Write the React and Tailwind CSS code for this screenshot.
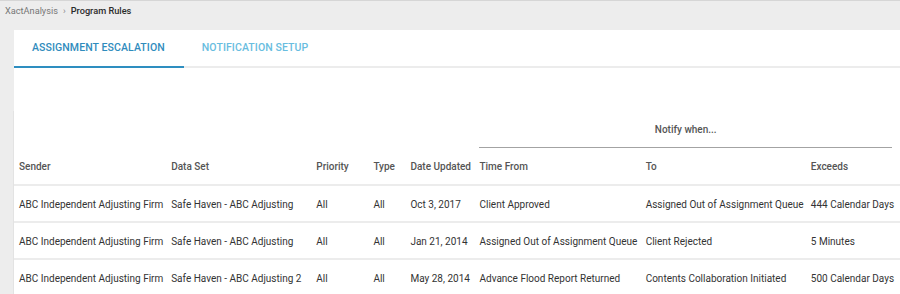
const rows = [
  {
    sender: "ABC Independent Adjusting Firm",
    dataSet: "Safe Haven - ABC Adjusting",
    priority: "All",
    type: "All",
    date: "Oct 3, 2017",
    from: "Client Approved",
    to: "Assigned Out of Assignment Queue",
    exceeds: "444 Calendar Days",
  },
  {
    sender: "ABC Independent Adjusting Firm",
    dataSet: "Safe Haven - ABC Adjusting",
    priority: "All",
    type: "All",
    date: "Jan 21, 2014",
    from: "Assigned Out of Assignment Queue",
    to: "Client Rejected",
    exceeds: "5 Minutes",
  },
  {
    sender: "ABC Independent Adjusting Firm",
    dataSet: "Safe Haven - ABC Adjusting 2",
    priority: "All",
    type: "All",
    date: "May 28, 2014",
    from: "Advance Flood Report Returned",
    to: "Contents Collaboration Initiated",
    exceeds: "500 Calendar Days",
  },
];

const headers = ["Sender", "Data Set", "Priority", "Type", "Date Updated", "Time From", "To", "Exceeds"];
const widths = [152, 145, 57, 37, 69, 166, 165, 95];

const App = () => {
  return (
    <div
      className="w-[900px] h-[294px] overflow-hidden bg-[#ededed] border-t border-[#d6d6d6]"
      style={{ fontFamily: "Roboto, 'Liberation Sans', sans-serif" }}
    >
      {/* Breadcrumb */}
      <div className="h-[29px] flex items-start pt-[2px] pl-[5px] text-[9.2px] leading-[16px]">
        <span className="text-[#777]">XactAnalysis</span>
        <span className="text-[#888] mx-[5px]">›</span>
        <span className="text-[#2b2b2b] font-medium">Program Rules</span>
      </div>

      {/* Card */}
      <div className="ml-[14px] bg-white h-[300px]">
        <div className="flex items-start border-b-2 border-[#ececec]">
          <button className="h-[38px] -mb-[2px] pl-[18px] pr-[19px] text-[10.5px] font-medium tracking-[0.1px] text-[#2f8cbd] border-b-2 border-[#2e8ec0]">
            ASSIGNMENT ESCALATION
          </button>
          <button className="h-[36px] px-[18px] text-[10.5px] font-medium tracking-[0.1px] text-[#68bde0]">
            NOTIFICATION SETUP
          </button>
        </div>

        <div className="h-[43px]" />

        <div className="border-l border-[#e3e3e3] -ml-px">
          <table className="table-fixed border-collapse text-[10px] w-[887px]">
            <colgroup>
              {widths.map((w, i) => (
                <col key={i} style={{ width: w }} />
              ))}
            </colgroup>
            <thead>
              <tr className="h-[37px]">
                <th colSpan={5}></th>
                <th colSpan={3} className="pl-[5px] pr-[9px] align-bottom">
                  <div className="h-[36px] flex items-center justify-center border-b border-[#a3a3a3] text-[#555] font-medium">
                    Notify when...
                  </div>
                </th>
              </tr>
              <tr className="h-[37px] border-b-2 border-[#ececec]">
                {headers.map((h) => (
                  <th key={h} className="pl-[5px] text-left font-medium text-[#555] whitespace-nowrap">
                    {h}
                  </th>
                ))}
              </tr>
            </thead>
            <tbody>
              {rows.map((r, i) => (
                <tr key={i} className="h-[37px] border-b-2 border-[#ececec] text-[#333]">
                  <td className="pl-[5px] pt-px whitespace-nowrap">{r.sender}</td>
                  <td className="pl-[5px] pt-px whitespace-nowrap">{r.dataSet}</td>
                  <td className="pl-[5px] pt-px">{r.priority}</td>
                  <td className="pl-[5px] pt-px">{r.type}</td>
                  <td className="pl-[5px] pt-px whitespace-nowrap">{r.date}</td>
                  <td className="pl-[5px] pt-px whitespace-nowrap">{r.from}</td>
                  <td className="pl-[5px] pt-px whitespace-nowrap">{r.to}</td>
                  <td className="pl-[5px] pt-px whitespace-nowrap">{r.exceeds}</td>
                </tr>
              ))}
            </tbody>
          </table>
        </div>
      </div>
    </div>
  );
};

export default App;
